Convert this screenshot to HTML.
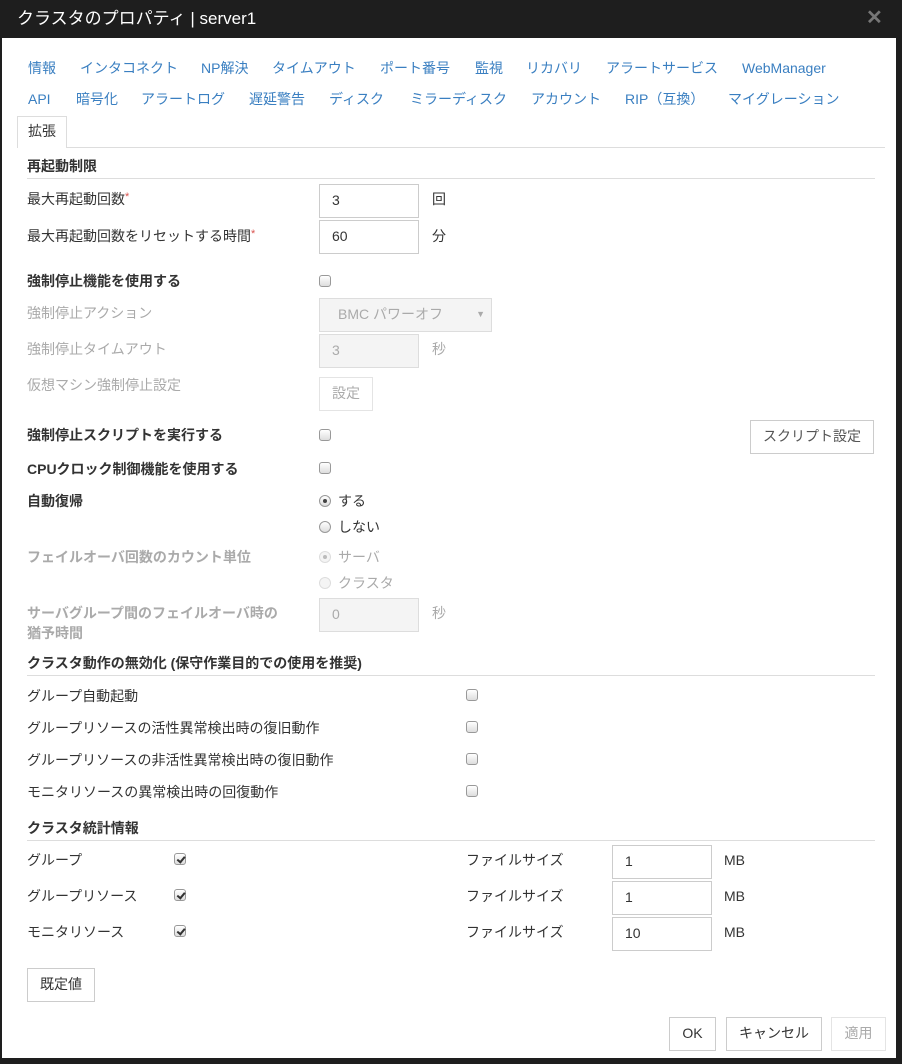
<!DOCTYPE html>
<html><head><meta charset="utf-8">
<style>
*{box-sizing:border-box;margin:0;padding:0}
body{width:902px;height:1064px;background:#1e1e1e;position:relative;overflow:hidden;font-family:"Liberation Sans","Noto Sans CJK JP",sans-serif;font-size:14px;color:#333}
.t{position:absolute;line-height:20px;white-space:nowrap}
.body{position:absolute;left:2px;top:38px;width:894px;height:1020px;background:#fff}
.tab{color:#3a7fc1}
.b{font-weight:bold}
.g{color:#aaa}
.in{position:absolute;border:1px solid #ccc;background:#fff;padding-left:12px;line-height:31px;font-size:14px}
.dis{background:#f4f4f4;border-color:#ddd;color:#aaa}
.btn{position:absolute;border:1px solid #ccc;background:#fff;text-align:center;line-height:31px}
.cb{position:absolute;width:12px;height:12px;border:1px solid #999;border-radius:3px;background:linear-gradient(#fff,#ddd)}
.rd{position:absolute;width:12px;height:12px;border:1px solid #999;border-radius:50%;background:linear-gradient(#fff,#ddd)}
.rd.on::after{content:"";position:absolute;left:3px;top:3px;width:4px;height:4px;border-radius:50%;background:#444}
.rd.d{border-color:#ddd;background:#f4f4f4}
.rd.d.on::after{background:#bbb}
.ck::after{content:"";position:absolute;left:2px;top:1px;width:6px;height:3px;border-left:2px solid #333;border-bottom:2px solid #333;transform:rotate(-50deg) translate(-1px,1px)}
.line{position:absolute;height:1px;background:#ddd}
.req{color:#d9534f;font-size:11px;vertical-align:top;position:relative;top:-2px}
</style></head><body>
<div class="t" style="left:17px;top:9px;color:#fff;font-size:17px;line-height:20px">クラスタのプロパティ | server1</div>
<div class="t" style="left:866px;top:8px;color:#777;font-size:20px;font-weight:bold">✕</div>
<div class="body"></div>

<div class="t tab" style="left:28px;top:58px">情報</div>
<div class="t tab" style="left:80px;top:58px">インタコネクト</div>
<div class="t tab" style="left:201px;top:58px">NP解決</div>
<div class="t tab" style="left:272px;top:58px">タイムアウト</div>
<div class="t tab" style="left:380px;top:58px">ポート番号</div>
<div class="t tab" style="left:475px;top:58px">監視</div>
<div class="t tab" style="left:526px;top:58px">リカバリ</div>
<div class="t tab" style="left:606px;top:58px">アラートサービス</div>
<div class="t tab" style="left:742px;top:58px">WebManager</div>
<div class="t tab" style="left:28px;top:89px">API</div>
<div class="t tab" style="left:76px;top:89px">暗号化</div>
<div class="t tab" style="left:141px;top:89px">アラートログ</div>
<div class="t tab" style="left:249px;top:89px">遅延警告</div>
<div class="t tab" style="left:329px;top:89px">ディスク</div>
<div class="t tab" style="left:410px;top:89px">ミラーディスク</div>
<div class="t tab" style="left:531px;top:89px">アカウント</div>
<div class="t tab" style="left:625px;top:89px">RIP（互換）</div>
<div class="t tab" style="left:728px;top:89px">マイグレーション</div>
<div class="line" style="left:17px;top:147px;width:868px"></div>
<div style="position:absolute;left:17px;top:116px;width:50px;height:32px;border:1px solid #ddd;border-bottom:none;background:#fff"></div>
<div class="t" style="left:28px;top:121px">拡張</div>

<div class="t b" style="left:27px;top:156px">再起動制限</div>
<div class="line" style="left:27px;top:178px;width:848px"></div>
<div class="t" style="left:27px;top:189px">最大再起動回数<span class="req">*</span></div>
<div class="in" style="left:319px;top:184px;width:100px;height:34px">3</div>
<div class="t" style="left:432px;top:189px">回</div>
<div class="t" style="left:27px;top:226px">最大再起動回数をリセットする時間<span class="req">*</span></div>
<div class="in" style="left:319px;top:220px;width:100px;height:34px">60</div>
<div class="t" style="left:432px;top:226px">分</div>

<div class="t b" style="left:27px;top:271px">強制停止機能を使用する</div>
<div class="cb" style="left:319px;top:275px"></div>
<div class="t g" style="left:27px;top:303px">強制停止アクション</div>
<div class="in dis" style="left:319px;top:298px;width:173px;height:34px;padding-left:18px">BMC パワーオフ<span style="position:absolute;right:6px;font-size:9px">▼</span></div>
<div class="t g" style="left:27px;top:339px">強制停止タイムアウト</div>
<div class="in dis" style="left:319px;top:334px;width:100px;height:34px">3</div>
<div class="t g" style="left:432px;top:339px">秒</div>
<div class="t g" style="left:27px;top:375px">仮想マシン強制停止設定</div>
<div class="btn g" style="left:319px;top:377px;width:54px;height:34px;border-color:#e4e4e4">設定</div>

<div class="t b" style="left:27px;top:425px">強制停止スクリプトを実行する</div>
<div class="cb" style="left:319px;top:429px"></div>
<div class="btn" style="left:750px;top:420px;width:124px;height:34px;color:#555">スクリプト設定</div>
<div class="t b" style="left:27px;top:459px">CPUクロック制御機能を使用する</div>
<div class="cb" style="left:319px;top:462px"></div>

<div class="t b" style="left:27px;top:491px">自動復帰</div>
<div class="rd on" style="left:319px;top:495px"></div>
<div class="t" style="left:338px;top:491px">する</div>
<div class="rd" style="left:319px;top:521px"></div>
<div class="t" style="left:338px;top:517px">しない</div>
<div class="t g b" style="left:27px;top:547px">フェイルオーバ回数のカウント単位</div>
<div class="rd d on" style="left:319px;top:551px"></div>
<div class="t g" style="left:338px;top:547px">サーバ</div>
<div class="rd d" style="left:319px;top:577px"></div>
<div class="t g" style="left:338px;top:573px">クラスタ</div>
<div class="t g b" style="left:27px;top:603px">サーバグループ間のフェイルオーバ時の</div>
<div class="t g b" style="left:27px;top:623px">猶予時間</div>
<div class="in dis" style="left:319px;top:598px;width:100px;height:34px">0</div>
<div class="t g" style="left:432px;top:603px">秒</div>

<div class="t b" style="left:27px;top:653px">クラスタ動作の無効化 (保守作業目的での使用を推奨)</div>
<div class="line" style="left:27px;top:675px;width:848px"></div>
<div class="t" style="left:27px;top:686px">グループ自動起動</div>
<div class="cb" style="left:466px;top:689px"></div>
<div class="t" style="left:27px;top:718px">グループリソースの活性異常検出時の復旧動作</div>
<div class="cb" style="left:466px;top:721px"></div>
<div class="t" style="left:27px;top:750px">グループリソースの非活性異常検出時の復旧動作</div>
<div class="cb" style="left:466px;top:753px"></div>
<div class="t" style="left:27px;top:782px">モニタリソースの異常検出時の回復動作</div>
<div class="cb" style="left:466px;top:785px"></div>

<div class="t b" style="left:27px;top:818px">クラスタ統計情報</div>
<div class="line" style="left:27px;top:840px;width:848px"></div>
<div class="t" style="left:27px;top:850px">グループ</div>
<div class="cb ck" style="left:174px;top:853px"></div>
<div class="t" style="left:466px;top:850px">ファイルサイズ</div>
<div class="in" style="left:612px;top:845px;width:100px;height:34px">1</div>
<div class="t" style="left:724px;top:850px">MB</div>
<div class="t" style="left:27px;top:886px">グループリソース</div>
<div class="cb ck" style="left:174px;top:889px"></div>
<div class="t" style="left:466px;top:886px">ファイルサイズ</div>
<div class="in" style="left:612px;top:881px;width:100px;height:34px">1</div>
<div class="t" style="left:724px;top:886px">MB</div>
<div class="t" style="left:27px;top:922px">モニタリソース</div>
<div class="cb ck" style="left:174px;top:925px"></div>
<div class="t" style="left:466px;top:922px">ファイルサイズ</div>
<div class="in" style="left:612px;top:917px;width:100px;height:34px">10</div>
<div class="t" style="left:724px;top:922px">MB</div>

<div class="btn" style="left:27px;top:968px;width:68px;height:34px">既定値</div>
<div class="btn" style="left:669px;top:1017px;width:47px;height:34px">OK</div>
<div class="btn" style="left:726px;top:1017px;width:96px;height:34px">キャンセル</div>
<div class="btn g" style="left:831px;top:1017px;width:55px;height:34px;border-color:#e4e4e4">適用</div>
</body></html>
